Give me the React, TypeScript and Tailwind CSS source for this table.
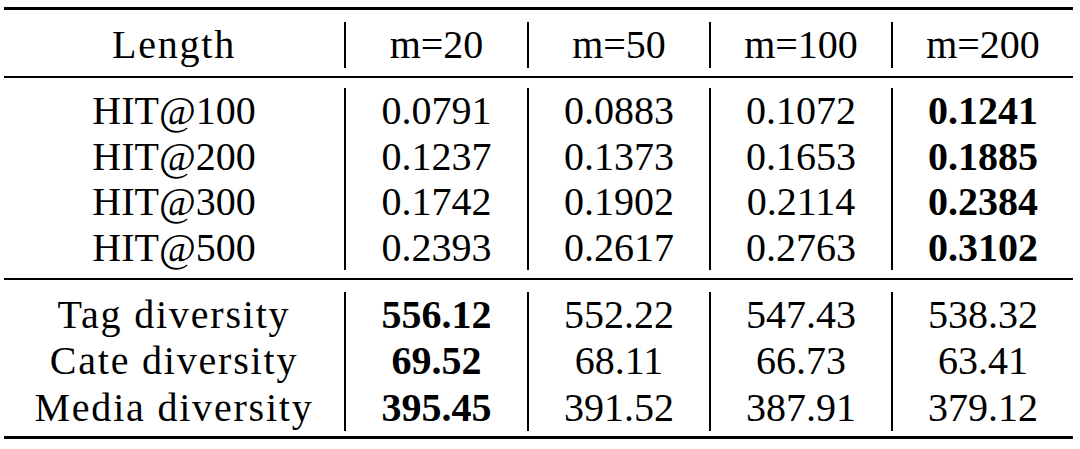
import React from "react";

type Cell = { t: string; b?: boolean };

const header: Cell[][] = [[{ t: "Length" }, { t: "m=20" }, { t: "m=50" }, { t: "m=100" }, { t: "m=200" }]];

const hit: Cell[][] = [
  [{ t: "HIT@100" }, { t: "0.0791" }, { t: "0.0883" }, { t: "0.1072" }, { t: "0.1241", b: true }],
  [{ t: "HIT@200" }, { t: "0.1237" }, { t: "0.1373" }, { t: "0.1653" }, { t: "0.1885", b: true }],
  [{ t: "HIT@300" }, { t: "0.1742" }, { t: "0.1902" }, { t: "0.2114" }, { t: "0.2384", b: true }],
  [{ t: "HIT@500" }, { t: "0.2393" }, { t: "0.2617" }, { t: "0.2763" }, { t: "0.3102", b: true }],
];

const div: Cell[][] = [
  [{ t: "Tag diversity" }, { t: "556.12", b: true }, { t: "552.22" }, { t: "547.43" }, { t: "538.32" }],
  [{ t: "Cate diversity" }, { t: "69.52", b: true }, { t: "68.11" }, { t: "66.73" }, { t: "63.41" }],
  [{ t: "Media diversity" }, { t: "395.45", b: true }, { t: "391.52" }, { t: "387.91" }, { t: "379.12" }],
];

const colClasses = [
  "w-[340px]",
  "w-[183px] border-l-2 border-black",
  "w-[182px] border-l-2 border-black",
  "w-[182px] border-l-2 border-black",
  "w-[182px] border-l-2 border-black",
];

function Group({ rows, lead, className, labelTrack }: { rows: Cell[][]; lead: string; className: string; labelTrack?: boolean }) {
  return (
    <div className={"flex " + className}>
      {colClasses.map((cc, ci) => (
        <div key={ci} className={"flex flex-col items-center " + cc}>
          {rows.map((r, ri) => (
            <div
              key={ri}
              className={
                lead +
                " whitespace-nowrap " +
                (r[ci].b ? "font-bold " : "font-normal ") +
                (ci === 0 && labelTrack ? "tracking-[1.8px]" : "")
              }
            >
              {r[ci].t}
            </div>
          ))}
        </div>
      ))}
    </div>
  );
}

export default function App() {
  return (
    <div className="bg-white w-[1080px] h-[449px] pt-[7px] pl-[4px] overflow-hidden">
      <div className="w-[1069px] flex flex-col font-['Liberation_Serif'] text-[40px] text-black">
        <div className="h-[3px] bg-black" />
        <Group rows={header} lead="leading-[46px] h-[46px]" className="mt-[12px]" labelTrack />
        <div className="mt-[8px] h-[2px] bg-black" />
        <Group rows={hit} lead="leading-[45.5px] h-[45.5px]" className="mt-[10px]" />
        <div className="mt-[8px] h-[2px] bg-black" />
        <Group rows={div} lead="leading-[46.33px] h-[46.33px]" className="mt-[12px]" labelTrack />
        <div className="mt-[5px] h-[3px] bg-black" />
      </div>
    </div>
  );
}
